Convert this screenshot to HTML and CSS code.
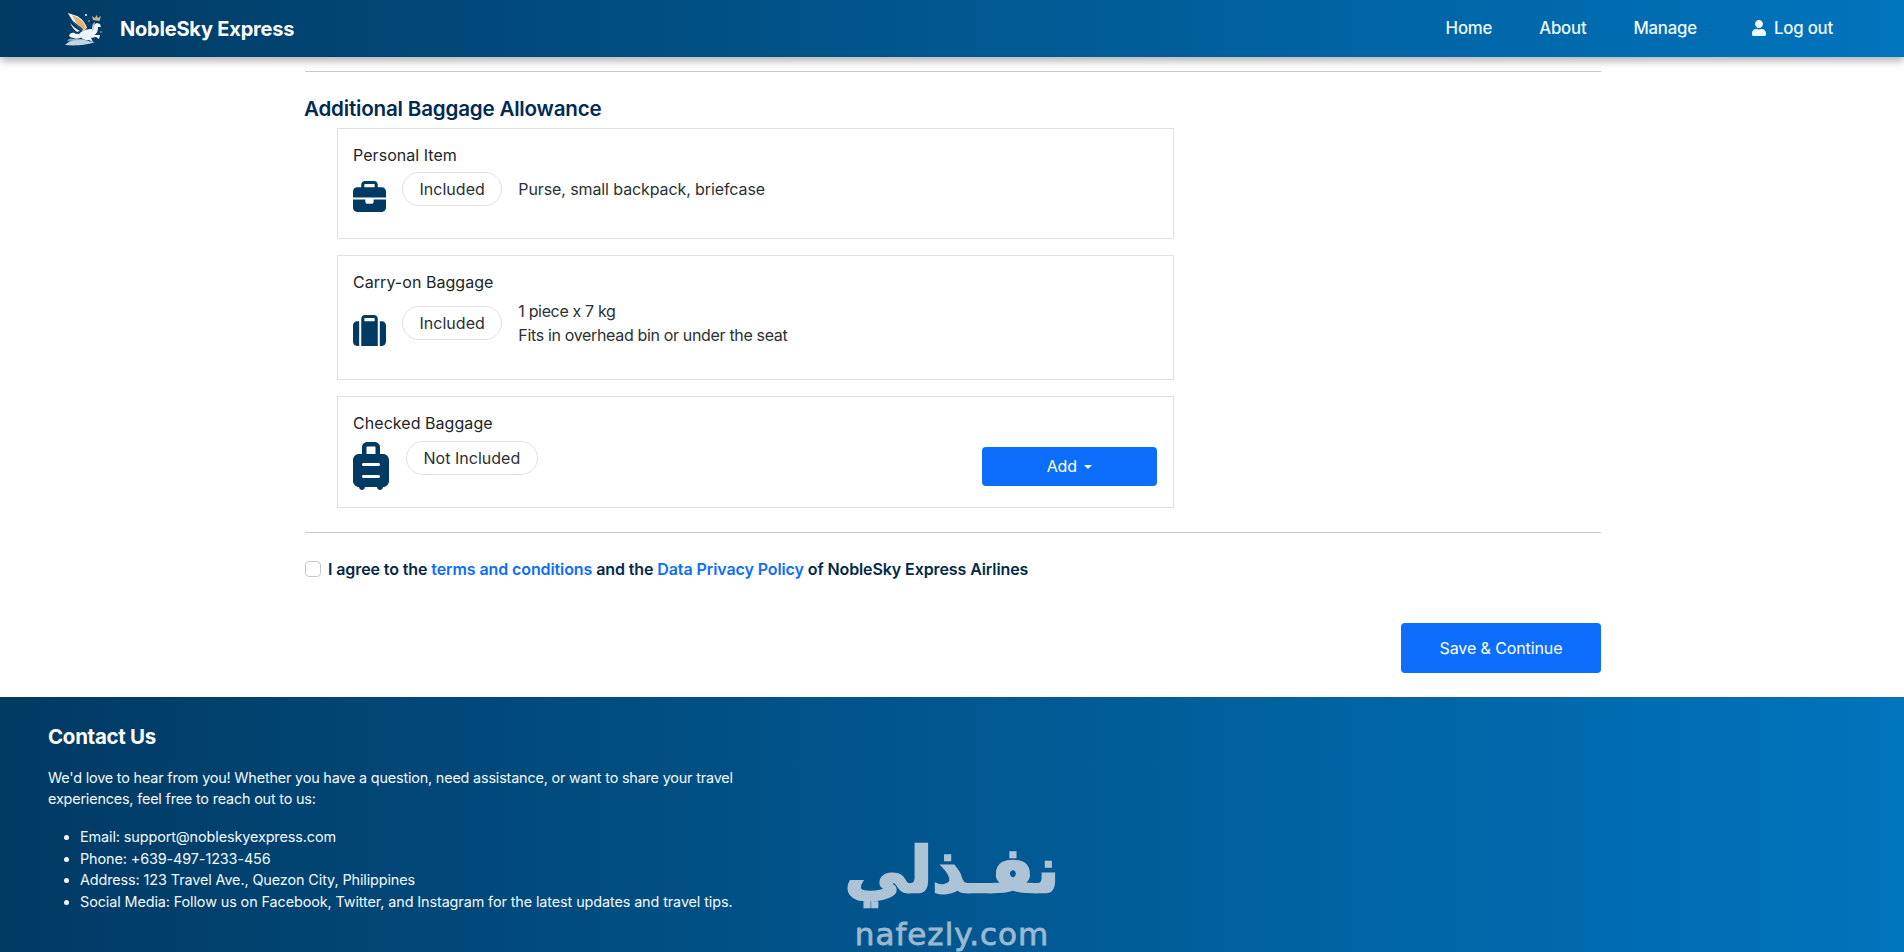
FILE: index.html
```html
<!DOCTYPE html>
<html lang="en">
<head>
<meta charset="utf-8">
<title>NobleSky Express</title>
<link rel="stylesheet" href="styles.css">
</head>
<body>
<header class="topbar">
  <a class="brand" href="#">
    <svg class="brand-logo" viewBox="0 0 38 34" aria-hidden="true">
      <path d="M4 1 L13 4 C17 6 21 10 23 16 L19 19 C14 16 8 9 4 1Z" fill="#f2f5f8"/>
      <path d="M8 3 L14 6 C18 8 21 12 22 16 L19 18 C15 15 11 9 8 3Z" fill="#e2b176"/>
      <path d="M9 9 C12 11 15 14 19 17 L18 19 C15 17 12 14 9 9Z" fill="#34475a"/>
      <path d="M6 11 C9 14 12 17 16 19 L13 20 C10 18 8 15 6 11Z" fill="#dfe7ee"/>
      <path d="M15 22 C18 18 24 17 28 17 C29 14 30 12 33 11 L36 12 L37 15 L34 15 C34 19 33 22 30 23 L36 23 L35 27 L32 25 L27 26 L29 30 L25 28 C21 29 17 27 15 22Z" fill="#eef3f7"/>
      <path d="M28 17 C28 13 29 11 31 10 L30 16 L28 20Z" fill="#b9c9d8"/>
      <path d="M29 8 L28 4 L31 6 L32.500 3 L34 6 L37 4 L35.500 9 Z" fill="#c9b48a"/>
      <path d="M1 33 C7 27 15 26 21 28 C25 29 28 30 31 30 C24 33 11 34 1 33Z" fill="#c5d4e2"/>
      <path d="M3 29 C5 26 8 26 9 27 C12 25 16 26 17 28 C12 28 7 29 3 29Z" fill="#8fa8bf"/>
      <path d="M5 24 C6 20 10 20 12 22 C15 21 17 23 17 26 C13 26 8 27 5 24Z" fill="#f4f7fa"/>
      <circle cx="22" cy="3" r="1" fill="#fff"/>
      <circle cx="25" cy="9" r=".7" fill="#dbe6ef"/>
      <circle cx="37" cy="20" r=".7" fill="#dbe6ef"/>
    </svg>
    <span>NobleSky Express</span>
  </a>
  <nav class="menu">
    <a href="#">Home</a>
    <a href="#">About</a>
    <a href="#">Manage</a>
    <a href="#" class="menu-user">
      <svg viewBox="0 0 448 512" aria-hidden="true"><path fill="currentColor" d="M224 256c70.700 0 128-57.300 128-128S294.700 0 224 0 96 57.300 96 128s57.300 128 128 128zm89.600 32h-16.700c-22.200 10.200-46.900 16-72.900 16s-50.600-5.800-72.900-16h-16.700C60.200 288 0 348.200 0 422.400V464c0 26.500 21.500 48 48 48h352c26.500 0 48-21.500 48-48v-41.600c0-74.200-60.200-134.400-134.400-134.400z"/></svg>
      Log out
    </a>
  </nav>
</header>

<main class="page">
  <hr class="rule rule-top">
  <h2 class="section-title">Additional Baggage Allowance</h2>
  <div class="cards">
    <section class="card card-personal">
      <h3 class="card-title">Personal Item</h3>
      <div class="card-row">
        <svg class="bag-icon" viewBox="0 0 512 512" aria-hidden="true"><path d="M184 48H328c4.400 0 8 3.600 8 8V96H176V56c0-4.400 3.600-8 8-8zm-56 8V96H64C28.700 96 0 124.700 0 160v96H192 320 512V160c0-35.300-28.700-64-64-64H384V56c0-30.900-25.100-56-56-56H184c-30.900 0-56 25.100-56 56zM512 288H320v32c0 17.700-14.300 32-32 32H224c-17.700 0-32-14.300-32-32V288H0V416c0 35.300 28.700 64 64 64H448c35.300 0 64-28.700 64-64V288z"/></svg>
        <span class="pill">Included</span>
        <div class="details"><p>Purse, small backpack, briefcase</p></div>
      </div>
    </section>
    <section class="card card-carry">
      <h3 class="card-title">Carry-on Baggage</h3>
      <div class="card-row">
        <svg class="bag-icon" viewBox="0 0 512 512" aria-hidden="true"><path d="M176 56V96H336V56c0-4.400-3.600-8-8-8H184c-4.400 0-8 3.600-8 8zM128 96V56c0-30.900 25.100-56 56-56H328c30.900 0 56 25.100 56 56V480H128V96zM64 96H96V480H64c-35.300 0-64-28.700-64-64V160c0-35.300 28.700-64 64-64zM448 480H416V96h32c35.300 0 64 28.700 64 64V416c0 35.300-28.700 64-64 64z"/></svg>
        <span class="pill">Included</span>
        <div class="details"><p>1 piece x 7 kg</p><p>Fits in overhead bin or under the seat</p></div>
      </div>
    </section>
    <section class="card card-checked">
      <h3 class="card-title">Checked Baggage</h3>
      <div class="card-row">
        <svg class="bag-icon bag-rolling" viewBox="0 0 384 512" aria-hidden="true"><path d="M144 56c0-4.400 3.600-8 8-8h80c4.400 0 8 3.600 8 8v72H144V56zm176 72H288V56c0-30.900-25.100-56-56-56H152C121.100 0 96 25.100 96 56v72H64c-35.300 0-64 28.700-64 64V416c0 35.300 28.700 64 64 64c0 17.700 14.300 32 32 32s32-14.300 32-32H256c0 17.700 14.300 32 32 32s32-14.300 32-32c35.300 0 64-28.700 64-64V192c0-35.300-28.700-64-64-64zM112 224H272c8.800 0 16 7.200 16 16s-7.200 16-16 16H112c-8.800 0-16-7.200-16-16s7.200-16 16-16zm0 128H272c8.800 0 16 7.200 16 16s-7.200 16-16 16H112c-8.800 0-16-7.200-16-16s7.200-16 16-16z"/></svg>
        <span class="pill">Not Included</span>
        <button class="btn btn-add" type="button">Add <i class="caret"></i></button>
      </div>
    </section>
  </div>
  <hr class="rule rule-bottom">
  <label class="agree">
    <input type="checkbox">
    <span>I agree to the <a href="#">terms and conditions</a> and the <a href="#">Data Privacy Policy</a> of NobleSky Express Airlines</span>
  </label>
  <div class="actions">
    <button class="btn btn-save" type="button">Save &amp; Continue</button>
  </div>
</main>

<footer class="footer">
  <div class="contact">
    <h3>Contact Us</h3>
    <p>We'd love to hear from you! Whether you have a question, need assistance, or want to share your travel experiences, feel free to reach out to us:</p>
    <ul>
      <li>Email: support@nobleskyexpress.com</li>
      <li>Phone: +639-497-1233-456</li>
      <li>Address: 123 Travel Ave., Quezon City, Philippines</li>
      <li>Social Media: Follow us on Facebook, Twitter, and Instagram for the latest updates and travel tips.</li>
    </ul>
  </div>
  <div class="watermark">
    <span class="wm-ar" lang="ar" dir="rtl">نفـذلي</span>
    <span class="wm-en">nafezly.com</span>
  </div>
</footer>
</body>
</html>
```
FILE: styles.css
```css
* { box-sizing: border-box; }
html, body { margin: 0; padding: 0; }
body {
  font-family: "Inter", "Liberation Sans", sans-serif;
  font-size: 16px;
  color: #212529;
  background: #fff;
  height: 952px;
  overflow: hidden;
  display: flex;
  flex-direction: column;
}
a { text-decoration: none; color: inherit; }
p { margin: 0; }

.topbar {
  flex: none;
  position: relative;
  z-index: 2;
  height: 57px;
  padding: 0 71px 0 64px;
  display: flex;
  align-items: center;
  justify-content: space-between;
  background: linear-gradient(90deg, #013a63, #0074bd);
  box-shadow: 0 4px 8px rgba(0, 0, 0, .3);
  color: #fff;
}
.brand {
  display: flex;
  align-items: center;
  gap: 18px;
  font-size: 20px;
  font-weight: 700;
  letter-spacing: -.2px;
}
.brand-logo { width: 38px; height: 34px; }
.menu {
  display: flex;
  align-items: center;
  gap: 47px;
  font-size: 16.8px;
  font-weight: 500;
  letter-spacing: -.2px;
  color: #eef8ff;
  margin-top: -2px;
}
.menu-user { display: flex; align-items: center; gap: 7px; margin-left: 7px; }
.menu-user svg { width: 16px; height: 16px; }

.page {
  flex: 1;
  width: 1296px;
  margin-left: 305px;
  padding-top: 14px;
}
.rule { border: 0; border-top: 1px solid #c8c9cb; margin: 0; }
.section-title {
  margin: 24px 0 7px -1px;
  font-size: 20.6px;
  line-height: 25px;
  font-weight: 600;
  letter-spacing: -.2px;
  color: #012a55;
}
.cards {
  width: 837px;
  margin-left: 32px;
  display: flex;
  flex-direction: column;
  gap: 16px;
}
.card {
  border: 1px solid #dee2e6;
  padding: 16px 16px 16px 15px;
}
.card-personal { height: 111px; }
.card-carry { height: 125px; }
.card-checked { height: 112px; }
.card-title {
  margin: 0;
  font-size: 16px;
  line-height: 20px;
  font-weight: 400;
  letter-spacing: .05px;
}
.card-row {
  display: flex;
  align-items: flex-start;
  margin-top: 7px;
}
.bag-icon {
  flex: none;
  width: 33px;
  height: 33px;
  fill: #013a63;
  margin-top: 9px;
}
.bag-rolling { width: 36px; height: 48px; margin-top: 1px; margin-right: 1px; }
.pill {
  flex: none;
  margin-left: 16px;
  padding: 0 16.500px;
  height: 34px;
  line-height: 32px;
  border: 1px solid #dee2e6;
  border-radius: 17px;
  letter-spacing: .02px;
  color: #2b3035;
  white-space: nowrap;
}
.details {
  margin: 5px 0 0 16px;
  line-height: 24px;
  letter-spacing: -.1px;
  color: #2b3035;
}
.card-carry .card-row { align-items: center; margin-top: 6px; }
.card-carry .bag-icon { align-self: flex-start; margin-top: 17px; }
.card-carry .details { margin-top: 0; letter-spacing: -.34px; }
.card-checked .card-row { margin-top: 8px; }

.btn {
  border: 0;
  border-radius: 4px;
  background: #0d6efd;
  color: #fff;
  font: inherit;
  letter-spacing: -.1px;
}
.btn-add {
  margin-left: auto;
  margin-top: 6px;
  width: 175px;
  height: 39px;
  padding-bottom: 3px;
}
.caret {
  display: inline-block;
  margin-left: 3px;
  vertical-align: 3px;
  border-top: 4.800px solid #fff;
  border-left: 4.800px solid transparent;
  border-right: 4.800px solid transparent;
}
.rule-bottom { margin-top: 24px; }
.agree {
  margin-top: 26px;
  display: flex;
  align-items: center;
  gap: 7px;
  font-weight: 600;
  color: #012a4a;
  letter-spacing: -.1px;
  line-height: 20px;
}
.agree input {
  appearance: none;
  margin: 0;
  width: 16px;
  height: 16px;
  background: #fff;
  border: 1px solid #c4c8cc;
  border-radius: 4px;
}
.agree a { color: #0d6efd; }
.actions {
  margin-top: 44px;
  display: flex;
  justify-content: flex-end;
}
.btn-save {
  width: 200px;
  height: 50px;
}

.footer {
  flex: none;
  position: relative;
  height: 255px;
  padding: 28px 48px 0;
  background: linear-gradient(90deg, #013a63, #0074bd);
  color: #f2f9ff;
}
.contact { width: 700px; font-size: 14.4px; line-height: 21px; letter-spacing: -.18px; }
.contact h3 {
  margin: 0 0 18px;
  font-size: 20.5px;
  line-height: 24px;
  font-weight: 700;
  letter-spacing: -.3px;
  color: #fff;
}
.contact ul { margin: 17px 0 0; padding-left: 32px; line-height: 21.6px; letter-spacing: -.1px; }
.watermark {
  position: absolute;
  left: 846px;
  top: 131px;
  width: 212px;
  display: flex;
  flex-direction: column;
  align-items: center;
  color: #adc3d6;
}
.wm-ar {
  font-family: "DejaVu Sans", sans-serif;
  font-weight: 700;
  font-size: 63px;
  line-height: 86px;
  white-space: nowrap;
  -webkit-text-stroke: 2.500px #adc3d6;
}
.wm-en {
  font-family: "DejaVu Sans", sans-serif;
  font-size: 31px;
  line-height: 36px;
  letter-spacing: 1px;
  white-space: nowrap;
  -webkit-text-stroke: .8px #adc3d6;
  opacity: .9;
  margin-top: 2px;
}
```
